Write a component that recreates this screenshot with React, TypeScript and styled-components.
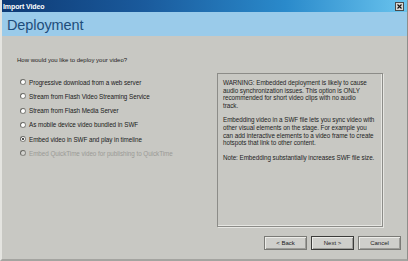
import React from "react";
import styled, { createGlobalStyle } from "styled-components";

const Global = createGlobalStyle`
  html, body { margin: 0; padding: 0; background: #c8c8c3; }
  body { font-family: "Liberation Sans", Arial, sans-serif; }
`;

const Window = styled.div`
  width: 408px;
  height: 261px;
  display: flex;
  flex-direction: column;
  box-sizing: border-box;
  background: #c8c8c3;
  border-left: 2px solid #e4e4e0;
  border-right: 1px solid #8e8e8a;
  border-bottom: 2px solid #a4a4a0;
  overflow: hidden;
`;

const TitleBar = styled.div`
  height: 12px;
  margin-left: -2px;
  margin-right: -1px;
  display: flex;
  align-items: center;
  justify-content: space-between;
  padding: 0 4px 0 3px;
  background: linear-gradient(90deg, #0e3a74 0%, #1a5a9c 35%, #2a8acb 70%, #6ac4ee 100%);
`;

const TitleText = styled.span`
  color: #ffffff;
  font-size: 7px;
  font-weight: bold;
  letter-spacing: -0.1px;
`;

const CloseBox = styled.div`
  width: 9px;
  height: 9px;
  box-sizing: border-box;
  background: #d8d8d4;
  border: 1px solid #4a4a4a;
  display: flex;
  align-items: center;
  justify-content: center;
`;

const Header = styled.div`
  height: 24px;
  margin-left: -2px;
  margin-right: -1px;
  background: #9acbea;
  display: flex;
  align-items: center;
  padding-left: 7px;
  padding-top: 2px;
  box-sizing: border-box;
`;

const HeaderTitle = styled.span`
  color: #1e4d7a;
  font-size: 14.5px;
  letter-spacing: -0.1px;
`;

const Body = styled.div`
  flex: 1;
  display: flex;
  flex-direction: column;
  padding: 20px 0 0 15px;
`;

const Question = styled.div`
  font-size: 6px;
  color: #222;
  height: 8px;
  line-height: 8px;
`;

const Main = styled.div`
  display: flex;
  margin-top: 9px;
`;

const Options = styled.div`
  width: 197px;
  display: flex;
  flex-direction: column;
  gap: 6.3px;
  padding-top: 5px;
  padding-left: 3px;
`;

const Option = styled.label<{ $disabled?: boolean }>`
  display: flex;
  align-items: center;
  gap: 3px;
  height: 8px;
  font-size: 6.3px;
  color: ${(p) => (p.$disabled ? "#9a9a96" : "#1a1a1a")};
  letter-spacing: -0.05px;
  white-space: nowrap;
`;

const Radio = styled.span<{ $checked?: boolean; $disabled?: boolean }>`
  width: 6px;
  height: 6px;
  flex: none;
  border-radius: 50%;
  box-sizing: border-box;
  background: ${(p) => (p.$disabled ? "#d4d4d0" : "#ffffff")};
  border: 1px solid #8a8a86;
  border-top-color: #6a6a66;
  border-left-color: #6a6a66;
  display: flex;
  align-items: center;
  justify-content: center;
  &::after {
    content: "";
    width: 2px;
    height: 2px;
    border-radius: 50%;
    background: #111;
    display: ${(p) => (p.$checked ? "block" : "none")};
  }
`;

const InfoPanel = styled.div`
  width: 166px;
  height: 154px;
  box-sizing: border-box;
  border: 1px solid #8c8c88;
  box-shadow: inset -1px -1px 0 #e6e6e2, 1px 1px 0 #e6e6e2;
  padding: 5px 4px 0 5px;
  display: flex;
  flex-direction: column;
  gap: 7px;
`;

const Para = styled.p`
  margin: 0;
  font-size: 6.3px;
  line-height: 7.6px;
  color: #1e1e1e;
  letter-spacing: -0.05px;
  white-space: nowrap;
`;

const Footer = styled.div`
  display: flex;
  justify-content: flex-end;
  gap: 4px;
  padding: 9px 6px 0 0;
`;

const Button = styled.button<{ $default?: boolean }>`
  width: 43px;
  height: 14px;
  box-sizing: border-box;
  padding: 0;
  background: #cfcfcb;
  font-family: "Liberation Sans", Arial, sans-serif;
  font-size: 6px;
  color: #1a1a1a;
  border: 1px solid ${(p) => (p.$default ? "#3c3c3a" : "#7a7a76")};
  box-shadow: inset 1px 1px 0 #ecece8, inset -1px -1px 0 #9c9c98;
  display: flex;
  align-items: center;
  justify-content: center;
`;

const options = [
  { label: "Progressive download from a web server" },
  { label: "Stream from Flash Video Streaming Service" },
  { label: "Stream from Flash Media Server" },
  { label: "As mobile device video bundled in SWF" },
  { label: "Embed video in SWF and play in timeline", checked: true },
  { label: "Embed QuickTime video for publishing to QuickTime", disabled: true },
];

const paragraphs = [
  [
    "WARNING: Embedded deployment is likely to cause",
    "audio synchronization issues. This option is ONLY",
    "recommended for short video clips with no audio",
    "track.",
  ],
  [
    "Embedding video in a SWF file lets you sync video with",
    "other visual elements on the stage. For example you",
    "can add interactive elements to a video frame to create",
    "hotspots that link to other content.",
  ],
  ["Note: Embedding substantially increases SWF file size."],
];

export default function App() {
  return (
    <>
      <Global />
      <Window>
        <TitleBar>
          <TitleText>Import Video</TitleText>
          <CloseBox>
            <svg width="5" height="5" viewBox="0 0 5 5">
              <path d="M0.5 0.5 L4.5 4.5 M4.5 0.5 L0.5 4.5" stroke="#111" strokeWidth="1.1" />
            </svg>
          </CloseBox>
        </TitleBar>
        <Header>
          <HeaderTitle>Deployment</HeaderTitle>
        </Header>
        <Body>
          <Question>How would you like to deploy your video?</Question>
          <Main>
            <Options>
              {options.map((o) => (
                <Option key={o.label} $disabled={o.disabled}>
                  <Radio $checked={o.checked} $disabled={o.disabled} />
                  {o.label}
                </Option>
              ))}
            </Options>
            <InfoPanel>
              {paragraphs.map((lines, i) => (
                <Para key={i}>
                  {lines.map((l, j) => (
                    <React.Fragment key={j}>
                      {l}
                      {j < lines.length - 1 && <br />}
                    </React.Fragment>
                  ))}
                </Para>
              ))}
            </InfoPanel>
          </Main>
          <Footer>
            <Button>&lt; Back</Button>
            <Button $default>Next &gt;</Button>
            <Button>Cancel</Button>
          </Footer>
        </Body>
      </Window>
    </>
  );
}
